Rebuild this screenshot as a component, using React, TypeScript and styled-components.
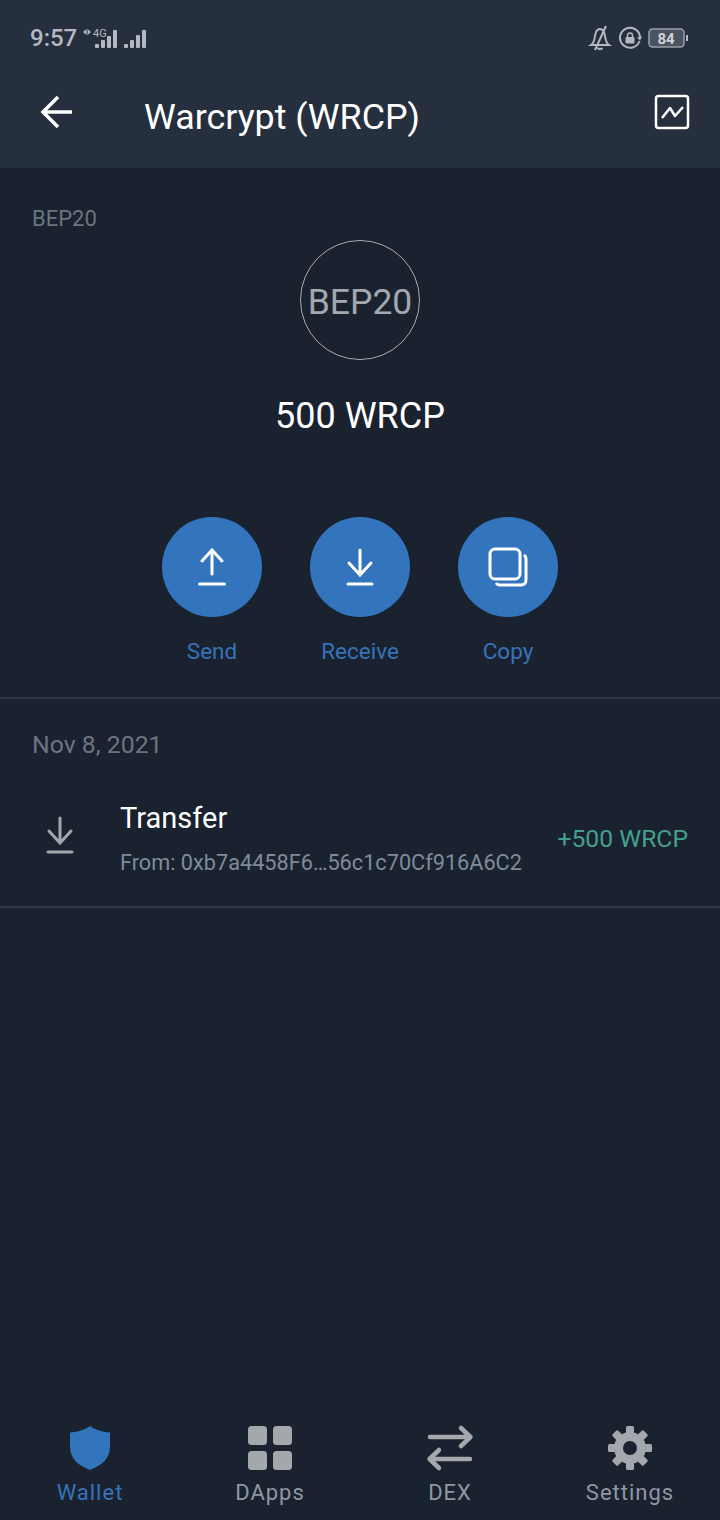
import styled, { createGlobalStyle } from "styled-components";

const GlobalStyle = createGlobalStyle`
  html, body {
    margin: 0;
    padding: 0;
    background: #1a2230;
  }
  * {
    box-sizing: border-box;
  }
`;

const Page = styled.div`
  width: 720px;
  height: 1520px;
  display: flex;
  flex-direction: column;
  background: #1a2230;
  font-family: Roboto, "Liberation Sans", sans-serif;
  overflow: hidden;
`;

const Header = styled.header`
  height: 168px;
  flex: none;
  display: flex;
  flex-direction: column;
  background: #262f3e;
`;

const StatusBar = styled.div`
  height: 76px;
  flex: none;
  display: flex;
  align-items: center;
  justify-content: space-between;
  padding: 0 32px 0 30px;
`;

const StatusGroup = styled.div<{ $gap?: number }>`
  display: flex;
  align-items: center;
  gap: ${(props) => props.$gap ?? 0}px;
`;

const Clock = styled.span`
  font-size: 24px;
  font-weight: 500;
  color: #b4b9c1;
  margin-right: 6px;
`;

const TitleBar = styled.div`
  display: flex;
  align-items: center;
  height: 80px;
  padding: 0 30px 0 38px;
`;

const TitleIcon = styled.div`
  display: flex;
  margin-bottom: 8px;
`;

const Title = styled.h1`
  margin: 2px 0 0 70px;
  flex: 1;
  font-size: 35.8px;
  font-weight: 400;
  color: #ffffff;
`;

const Body = styled.main`
  flex: 1;
  display: flex;
  flex-direction: column;
`;

const Summary = styled.section`
  height: 531px;
  flex: none;
  display: flex;
  flex-direction: column;
  align-items: center;
  padding: 37px 32px 0;
  border-bottom: 2px solid #2f3744;
`;

const NetworkLabel = styled.div`
  align-self: flex-start;
  font-size: 22px;
  line-height: 28px;
  color: #6b7480;
`;

const CoinBadge = styled.div`
  width: 120px;
  height: 120px;
  margin-top: 7px;
  padding-top: 4px;
  border: 1px solid #a9adb3;
  border-radius: 50%;
  display: flex;
  align-items: center;
  justify-content: center;
  font-size: 35.5px;
  color: #a3a8ae;
`;

const Balance = styled.div`
  margin-top: 34px;
  font-size: 36px;
  line-height: 44px;
  color: #ffffff;
`;

const Actions = styled.div`
  margin-top: 79px;
  display: flex;
  gap: 48px;
`;

const Action = styled.div`
  width: 100px;
  display: flex;
  flex-direction: column;
  align-items: center;
`;

const ActionCircle = styled.div`
  width: 100px;
  height: 100px;
  border-radius: 50%;
  background: #3375bd;
  display: flex;
  align-items: center;
  justify-content: center;
`;

const ActionLabel = styled.div`
  margin-top: 19px;
  font-size: 22.5px;
  line-height: 30px;
  color: #3673b8;
  white-space: nowrap;
`;

const DateLabel = styled.div`
  padding: 31px 32px 0;
  font-size: 24.8px;
  line-height: 30px;
  color: #6b7480;
`;

const TxRow = styled.div`
  height: 148px;
  display: flex;
  align-items: center;
  padding: 0 32px 0 45px;
  border-bottom: 2px solid #2f3744;
`;

const TxIcon = styled.div`
  width: 40px;
  height: 40px;
  flex: none;
  display: flex;
  margin: 4px 35px 0 0;
`;

const TxText = styled.div`
  flex: 1;
  display: flex;
  flex-direction: column;
  gap: 14px;
  padding-top: 12px;
`;

const TxTitle = styled.div`
  font-size: 29px;
  line-height: 34px;
  color: #ffffff;
`;

const TxFrom = styled.div`
  font-size: 21.7px;
  line-height: 28px;
  color: #808b99;
  white-space: nowrap;
`;

const TxAmount = styled.div`
  padding-top: 10px;
  font-size: 24.7px;
  color: #44a08f;
  white-space: nowrap;
`;

const TabBar = styled.nav`
  height: 112px;
  flex: none;
  display: grid;
  grid-template-columns: repeat(4, 180px);
  padding-top: 16px;
`;

const Tab = styled.div<{ $active?: boolean }>`
  display: flex;
  flex-direction: column;
  align-items: center;
  color: ${(props) => (props.$active ? "#3673b8" : "#8f97a3")};
`;

const TabIcon = styled.div`
  width: 48px;
  height: 48px;
  display: flex;
`;

const TabLabel = styled.div`
  margin-top: 6px;
  font-size: 22px;
  line-height: 30px;
  letter-spacing: 1px;
`;

const ArrowBack = () => (
  <svg width="36" height="36" viewBox="0 0 36 36" fill="none" stroke="#fff" strokeWidth="3.5">
    <path d="M34 18H5M20 3 5 18l15 15" />
  </svg>
);

const ChartIcon = () => (
  <svg width="36" height="36" viewBox="0 0 36 36" fill="none" stroke="#fff" strokeLinejoin="round">
    <rect x="2" y="2" width="32" height="32" rx="2.5" strokeWidth="2.5" />
    <path d="M8 24l8-10 5 8 8-9" strokeWidth="2.5" />
  </svg>
);

const SendIcon = () => (
  <svg width="30" height="40" viewBox="0 0 30 40" fill="none" stroke="#fff" strokeWidth="3" strokeLinecap="round">
    <path d="M15 27V3M5 14 15 3l10 11M2.500 37h25" />
  </svg>
);

const ReceiveIcon = ({ color = "#fff" }: { color?: string }) => (
  <svg width="30" height="40" viewBox="0 0 30 40" fill="none" stroke={color} strokeWidth="3" strokeLinecap="round">
    <path d="M15 3v25M4 16l11 12 11-12M3 37h24" />
  </svg>
);

const CopyIcon = () => (
  <svg width="40" height="40" viewBox="0 0 40 40" fill="none" stroke="#fff" strokeWidth="3">
    <rect x="2" y="2" width="30" height="30" rx="5" />
    <path d="M36 8c1.500 1 2 2 2 4v21c0 3-2 5-5 5H12c-2 0-3-.5-4-2" />
  </svg>
);

const ShieldIcon = () => (
  <svg width="48" height="48" viewBox="0 0 48 48" fill="#3375bd">
    <path d="M24 2C30 6 36 8 44 8.500V22C44 35 36 41 24 46 12 41 4 35 4 22V8.500C12 8 18 6 24 2Z" />
  </svg>
);

const GridIcon = () => (
  <svg width="48" height="48" viewBox="0 0 48 48" fill="#a4a7ac">
    <rect x="2" y="2" width="19" height="19" rx="3.5" />
    <rect x="27" y="2" width="19" height="19" rx="3.5" />
    <rect x="2" y="27" width="19" height="19" rx="3.5" />
    <rect x="27" y="27" width="19" height="19" rx="3.5" />
  </svg>
);

const SwapIcon = () => (
  <svg width="48" height="48" viewBox="0 0 48 48" fill="none" stroke="#a4a7ac" strokeWidth="4.5" strokeLinecap="round" strokeLinejoin="round">
    <path d="M4 13h40M35 4l9.500 9-9.500 9M44 35H4M13 26l-9.500 9 9.500 9" />
  </svg>
);

const GearIcon = () => (
  <svg width="48" height="48" viewBox="0 0 48 48" fill="#a4a7ac">
    {[0, 45, 90, 135, 180, 225, 270, 315].map((angle) => (
      <rect key={angle} x="20" y="2" width="8" height="10" rx="1.5" transform={`rotate(${angle} 24 24)`} />
    ))}
    <circle cx="24" cy="24" r="11.500" fill="none" stroke="#a4a7ac" strokeWidth="9" />
  </svg>
);

const SignalLeft = () => (
  <svg width="64" height="24" viewBox="0 0 64 24" fill="#b4b9c1">
    <path d="M3.500 3v6L0 6zM4.500 3v6L8 6z" />
    <text x="10" y="11" fontSize="11" fontFamily="Roboto, sans-serif" fill="#b4b9c1">4G</text>
    <rect x="12" y="18" width="4" height="4" rx="1" />
    <rect x="18" y="14" width="4" height="8" rx="1" />
    <rect x="24" y="10" width="4" height="12" rx="1" />
    <rect x="30" y="4" width="4" height="18" rx="1" />
    <rect x="41" y="18" width="4" height="4" rx="1" />
    <rect x="47" y="14" width="4" height="8" rx="1" />
    <rect x="53" y="9" width="4" height="13" rx="1" />
    <rect x="59" y="4" width="4" height="18" rx="1" />
  </svg>
);

const BellOff = () => (
  <svg width="24" height="26" viewBox="0 0 24 26" fill="none" stroke="#b4b9c1" strokeWidth="2">
    <path d="M3 20c3-2 3.500-5 4-9 .5-4 2.500-7 5-7s4.500 3 5 7c.5 4 1 7 4 9zM9.500 23c1.500 1.500 3.500 1.500 5 0M18 1 7 25" />
  </svg>
);

const RotationLock = () => (
  <svg width="24" height="24" viewBox="0 0 24 24" fill="none" stroke="#b4b9c1">
    <path d="M21.500 15A10 10 0 1 1 22 11" strokeWidth="2" />
    <path d="M19 11.500l3 3 2-4z" fill="#b4b9c1" stroke="none" />
    <rect x="7.500" y="11" width="9" height="6.500" rx="1" fill="#b4b9c1" stroke="none" />
    <path d="M9.500 11V9.500a2.500 2.500 0 0 1 5 0V11" strokeWidth="1.500" />
  </svg>
);

const BatteryIcon = () => (
  <svg width="40" height="20" viewBox="0 0 40 20">
    <rect x="1" y="1" width="35" height="18" rx="3.5" fill="#4a5361" stroke="#9aa0a8" strokeWidth="1.5" />
    <rect x="38" y="7" width="2" height="6" fill="#b4b9c1" />
    <text x="18" y="15.500" fontSize="15" fontWeight="700" textAnchor="middle" fontFamily="Roboto, sans-serif" fill="#cfd2d6">84</text>
  </svg>
);

export default function App() {
  return (
    <Page>
      <GlobalStyle />
      <Header>
        <StatusBar>
          <StatusGroup>
            <Clock>9:57</Clock>
            <SignalLeft />
          </StatusGroup>
          <StatusGroup $gap={6}>
            <BellOff />
            <RotationLock />
            <BatteryIcon />
          </StatusGroup>
        </StatusBar>
        <TitleBar>
          <TitleIcon>
            <ArrowBack />
          </TitleIcon>
          <Title>Warcrypt (WRCP)</Title>
          <TitleIcon>
            <ChartIcon />
          </TitleIcon>
        </TitleBar>
      </Header>
      <Body>
        <Summary>
          <NetworkLabel>BEP20</NetworkLabel>
          <CoinBadge>BEP20</CoinBadge>
          <Balance>500 WRCP</Balance>
          <Actions>
            <Action>
              <ActionCircle>
                <SendIcon />
              </ActionCircle>
              <ActionLabel>Send</ActionLabel>
            </Action>
            <Action>
              <ActionCircle>
                <ReceiveIcon />
              </ActionCircle>
              <ActionLabel>Receive</ActionLabel>
            </Action>
            <Action>
              <ActionCircle>
                <CopyIcon />
              </ActionCircle>
              <ActionLabel>Copy</ActionLabel>
            </Action>
          </Actions>
        </Summary>
        <DateLabel>Nov 8, 2021</DateLabel>
        <TxRow>
          <TxIcon>
            <ReceiveIcon color="#a4a7ac" />
          </TxIcon>
          <TxText>
            <TxTitle>Transfer</TxTitle>
            <TxFrom>From: 0xb7a4458F6…56c1c70Cf916A6C2</TxFrom>
          </TxText>
          <TxAmount>+500 WRCP</TxAmount>
        </TxRow>
      </Body>
      <TabBar>
        <Tab $active>
          <TabIcon>
            <ShieldIcon />
          </TabIcon>
          <TabLabel>Wallet</TabLabel>
        </Tab>
        <Tab>
          <TabIcon>
            <GridIcon />
          </TabIcon>
          <TabLabel>DApps</TabLabel>
        </Tab>
        <Tab>
          <TabIcon>
            <SwapIcon />
          </TabIcon>
          <TabLabel>DEX</TabLabel>
        </Tab>
        <Tab>
          <TabIcon>
            <GearIcon />
          </TabIcon>
          <TabLabel>Settings</TabLabel>
        </Tab>
      </TabBar>
    </Page>
  );
}
